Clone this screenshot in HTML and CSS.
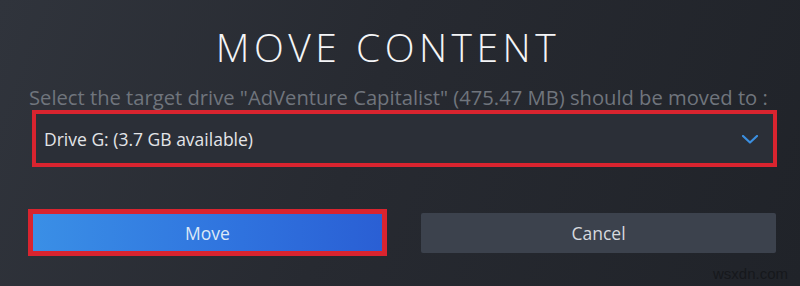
FILE: index.html
```html
<!DOCTYPE html>
<html lang="en">
<head>
    <meta charset="UTF-8">
    <meta name="viewport" content="width=device-width, initial-scale=1.0">
    <title>Move Content</title>
    <link rel="stylesheet" href="styles.css">
</head>
<body>
    <div class="dialog">
        <h1 class="title">MOVE CONTENT</h1>
        <p class="prompt">Select the target drive "AdVenture Capitalist" (475.47 MB) should be moved to :</p>

        <div class="highlight drive-highlight">
            <div class="drive-select">
                <span class="drive-label">Drive G: (3.7 GB available)</span>
                <svg class="chevron" width="16" height="9" viewBox="0 0 16 9">
                    <path d="M1 1 L8 7.5 L15 1" fill="none" stroke="#3b8fe0" stroke-width="2.2" stroke-linecap="round" stroke-linejoin="round"/>
                </svg>
            </div>
        </div>

        <div class="actions">
            <div class="highlight move-highlight">
                <button class="btn btn-move">Move</button>
            </div>
            <button class="btn btn-cancel">Cancel</button>
        </div>
    </div>
    <div class="watermark">wsxdn.com</div>
</body>
</html>
```

FILE: styles.css
```css
* {
    box-sizing: border-box;
    margin: 0;
    padding: 0;
}

body {
    width: 800px;
    height: 286px;
    overflow: hidden;
    position: relative;
    font-family: 'Open Sans', 'Noto Sans', sans-serif;
    background: linear-gradient(110deg, #30343c 0%, #272a31 45%, #202329 100%);
}

.dialog {
    padding: 25px 23px 0 28px;
}

.title {
    text-align: center;
    color: #f4f5f7;
    font-size: 39px;
    font-weight: 300;
    letter-spacing: 4.5px;
    line-height: 44px;
    margin-right: 29px;
}

.prompt {
    margin-top: 15px;
    padding-left: 1px;
    color: #70757d;
    font-size: 20.2px;
    line-height: 26px;
    white-space: nowrap;
}

.highlight {
    border: 4px solid #d9242f;
}

.drive-highlight {
    margin: 0 0 0 4px;
}

.drive-select {
    height: 49px;
    background: #2b2f37;
    display: flex;
    align-items: center;
    justify-content: space-between;
    padding: 0 15px 0 8px;
}

.drive-label {
    color: #e3e5e8;
    font-size: 17.5px;
}

.chevron {
    display: block;
    margin-top: 2px;
}

.actions {
    margin-top: 42px;
    display: flex;
    align-items: center;
    gap: 34px;
}

.move-highlight {
    width: 359px;
    border-width: 5px;
}

.btn {
    display: block;
    border: none;
    font-family: inherit;
    font-size: 17.5px;
    cursor: pointer;
}

.btn-move {
    width: 100%;
    height: 37px;
    color: #dce8f7;
    background: linear-gradient(90deg, #3a8fe6 0%, #2f72de 60%, #2a5fd4 100%);
}

.btn-cancel {
    width: 355px;
    height: 40px;
    color: #d6d9de;
    background: #3c424d;
    border-radius: 2px;
}

.watermark {
    position: absolute;
    right: 12px;
    bottom: 4px;
    color: #16181c;
    font-family: 'Liberation Sans', Arial, sans-serif;
    font-size: 15px;
}
```
